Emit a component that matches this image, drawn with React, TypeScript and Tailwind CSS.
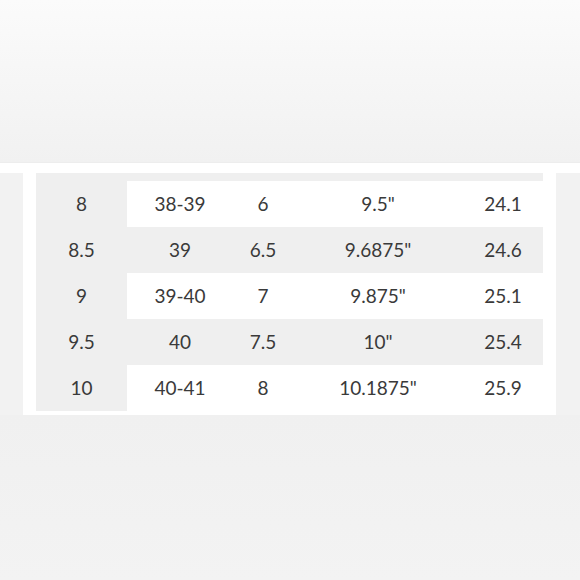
const rows = [
  ["8", "38-39", "6", '9.5"', "24.1"],
  ["8.5", "39", "6.5", '9.6875"', "24.6"],
  ["9", "39-40", "7", '9.875"', "25.1"],
  ["9.5", "40", "7.5", '10"', "25.4"],
  ["10", "40-41", "8", '10.1875"', "25.9"],
];

const widths = ["w-[91px]", "w-[106px]", "w-[60px]", "w-[170px]", "w-[80px]"];

export default function App() {
  return (
    <div
      className="w-[580px] h-[580px] bg-[#f2f2f2] flex flex-col text-[#3a3a3a]"
      style={{ fontFamily: "Lato, 'Open Sans', sans-serif" }}
    >
      <div className="h-[163px] bg-gradient-to-b from-[#fbfbfb] to-[#f1f1f1] border-b border-[#ededed]" />
      <div className="h-[10px] bg-white" />
      <div className="flex">
        <div className="w-[23px]" />
        <div className="w-[533px] bg-white px-[13px] pb-[4px]">
          <div className="h-[8px] bg-[#efefef]" />
          {rows.map((row, i) => (
            <div key={i} className={`flex h-[46px] ${i % 2 === 1 ? "bg-[#efefef]" : "bg-white"}`}>
              {row.map((cell, j) => (
                <div
                  key={j}
                  className={`${widths[j]} flex items-center justify-center text-[19px] pt-[1px] ${j === 0 ? "bg-[#efefef]" : ""}`}
                >
                  {cell}
                </div>
              ))}
            </div>
          ))}
        </div>
      </div>
      <div className="flex-1 bg-gradient-to-b from-[#f0f0f0] to-[#f3f3f3]" />
    </div>
  );
}
